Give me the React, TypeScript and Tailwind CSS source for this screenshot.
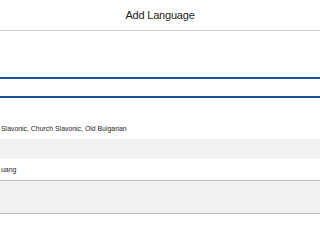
import React from 'react';

const rows = [
  { label: 'Slavonic, Church Slavonic, Old Bulgarian', shaded: false },
  { label: '', shaded: true },
  { label: 'uang', shaded: false },
];

export default function App() {
  return (
    <div
      className="w-[320px] h-[214px] overflow-hidden bg-white text-[#1c1c1c]"
      style={{ fontFamily: '"Liberation Sans", Arial, sans-serif' }}
    >
      <div className="h-[30px] flex items-center justify-center border-b border-[#cfcfcf] box-content">
        <h1 className="text-[11px] tracking-[-0.2px] leading-none pt-[1px]">Add Language</h1>
      </div>

      <div className="h-[46px]" />

      <div className="h-[21px] border-y-2 border-[#1b4e9e]">
        <input className="w-full h-full outline-none bg-transparent px-2 text-[8px]" aria-label="Search languages" />
      </div>

      <div className="h-[21px]" />

      <ul>
        {rows.map((row, i) => (
          <li
            key={i}
            className={`h-[20px] flex items-center pl-px text-[6.9px] leading-none ${
              row.shaded ? 'bg-[#f2f2f2]' : 'bg-white'
            } ${i === 2 ? 'h-[21px] pt-[1px]' : ''}`}
          >
            {row.label}
          </li>
        ))}
      </ul>

      <div className="h-[32px] bg-[#f2f2f2] border-t border-b border-[#b9b9b9] box-content" />
    </div>
  );
}
